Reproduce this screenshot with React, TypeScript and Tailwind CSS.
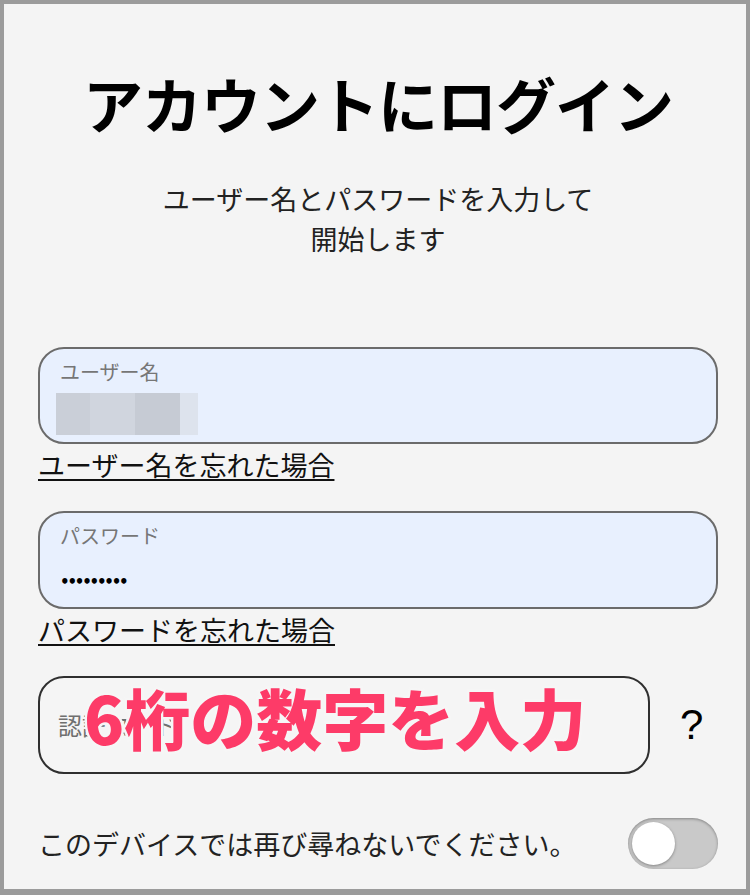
import { useState } from "react";

const jp = "font-['Noto_Sans_CJK_JP','Noto_Sans',sans-serif]";

function Toggle({ on, onChange }: { on: boolean; onChange: (v: boolean) => void }) {
  return (
    <button
      type="button"
      onClick={() => onChange(!on)}
      className={`flex h-[51px] w-[90px] shrink-0 items-center rounded-full p-[4px] shadow-[inset_0_1px_3px_rgba(0,0,0,0.35)] ${
        on ? "justify-end bg-[#4caf50]" : "justify-start bg-[#c9c9c9]"
      }`}
    >
      <span className="h-[43px] w-[43px] rounded-full bg-white shadow-[0_1px_3px_rgba(0,0,0,0.35)]" />
    </button>
  );
}

export default function App() {
  const [remember, setRemember] = useState(false);

  return (
    <div className={`${jp} h-[895px] w-[750px] border-x-4 border-t-4 border-b-[6px] border-[#9b9b9b] bg-[#f4f4f4] text-[#111]`}>
      <div className="flex flex-col pl-[34px] pr-[28px] pt-[69px]">
        <h1 className="text-center text-[60px] font-bold leading-none tracking-[-1px] text-black">アカウントにログイン</h1>

        <p className="mt-[46px] text-center text-[27px] leading-[40px] text-[#222]">
          ユーザー名とパスワードを入力して
          <br />
          開始します
        </p>

        {/* username */}
        <div className="mt-[88px] flex h-[97px] flex-col rounded-[26px] border-2 border-[#6b6b6b] bg-[#e8f0fe] px-[20px] pt-[10px]">
          <span className="text-[20px] leading-[26px] text-[#767676]">ユーザー名</span>
          <div className="mt-[8px] flex h-[42px] w-[142px] -translate-x-[4px]">
            <div className="w-[34px] bg-[#cacfd8]" />
            <div className="w-[45px] bg-[#d0d5de]" />
            <div className="w-[45px] bg-[#c6cbd4]" />
            <div className="w-[18px] bg-[#dde3ed]" />
          </div>
        </div>
        <a href="#" className="mt-[5px] self-start text-[27px] leading-[32px] text-[#111] underline decoration-[1.5px] underline-offset-[3px]">
          ユーザー名を忘れた場合
        </a>

        {/* password */}
        <div className="mt-[30px] flex h-[98px] flex-col rounded-[26px] border-2 border-[#6b6b6b] bg-[#e8f0fe] px-[20px] pt-[10px]">
          <span className="text-[20px] leading-[26px] text-[#767676]">パスワード</span>
          <span className="mt-[26px] font-['DejaVu_Sans',sans-serif] text-[15px] font-bold leading-none tracking-[-2.2px] text-black">
            •••••••••
          </span>
        </div>
        <a href="#" className="mt-[5px] self-start text-[27px] leading-[32px] text-[#111] underline decoration-[1.5px] underline-offset-[3px]">
          パスワードを忘れた場合
        </a>

        {/* code */}
        <div className="mt-[30px] flex items-center gap-[30px]">
          <div className="relative flex h-[98px] w-[612px] items-center rounded-[26px] border-2 border-[#2f2f2f] bg-[#f5f5f5] px-[18px]">
            <span className="text-[24px] text-[#6f6f6f]">認証コード</span>
            <span className="absolute left-[44px] top-[-2px] text-[66px] font-black leading-[80px] text-[#fd3b68] [paint-order:stroke_fill] [-webkit-text-stroke:5px_#f6f6f6]">
              6桁の数字を入力
            </span>
          </div>
          <span className="font-['Liberation_Sans',sans-serif] text-[42px] leading-none text-black">?</span>
        </div>

        {/* remember */}
        <div className="mt-[44px] flex items-center justify-between">
          <span className="text-[27px] leading-[32px] text-[#222]">このデバイスでは再び尋ねないでください。</span>
          <Toggle on={remember} onChange={setRemember} />
        </div>
      </div>
    </div>
  );
}
